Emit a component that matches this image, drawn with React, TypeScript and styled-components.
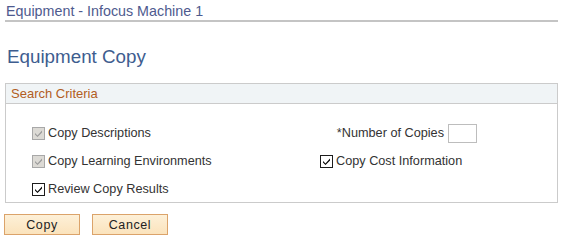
import React from "react";
import styled, { createGlobalStyle } from "styled-components";

const Global = createGlobalStyle`
  html, body { margin: 0; padding: 0; background: #fff; }
  body { font-family: Arial, "Liberation Sans", sans-serif; }
`;

const Page = styled.div`
  width: 563px;
  height: 240px;
  box-sizing: border-box;
  padding: 0 5px 0 5px;
  display: flex;
  flex-direction: column;
`;

const PageTitle = styled.div`
  font-size: 14.3px;
  color: #4e5a8e;
  padding: 3px 0 2px 1px;
  line-height: 16px;
  border-bottom: 2px solid #c4c4c4;
  height: 15px;
`;

const Heading = styled.h1`
  margin: 25px 0 0 2px;
  font-size: 18.8px;
  font-weight: normal;
  line-height: 20px;
  color: #3e5d8f;
`;

const Box = styled.section`
  margin-top: 16px;
  width: 553px;
  height: 120px;
  box-sizing: border-box;
  border: 1px solid #cbcbcb;
  display: flex;
  flex-direction: column;
`;

const BoxHeader = styled.div`
  height: 19px;
  background: #f0f4f6;
  border-bottom: 1px solid #cbcbcb;
  color: #b25d23;
  font-size: 13px;
  line-height: 19px;
  padding-left: 5px;
`;

const Grid = styled.div`
  display: grid;
  grid-template-columns: 288px 1fr;
  grid-auto-rows: 28px;
  padding: 19px 0 0 26px;
  font-size: 12.7px;
  color: #333;
`;

const CheckRow = styled.label`
  display: flex;
  align-items: center;
  gap: 3px;
  height: 20px;
`;

const Box13 = styled.span<{ $disabled?: boolean }>`
  width: 13px;
  height: 13px;
  box-sizing: border-box;
  border: 1px solid ${(p) => (p.$disabled ? "#a8a8a8" : "#1c1c1c")};
  background: ${(p) => (p.$disabled ? "#dcdad5" : "#fff")};
  display: inline-flex;
  align-items: center;
  justify-content: center;
  flex: none;
`;

const NumberField = styled.div`
  display: flex;
  align-items: center;
  justify-content: flex-end;
  gap: 4px;
  width: 157px;
  height: 20px;
`;

const Input = styled.span`
  width: 29px;
  height: 19px;
  box-sizing: border-box;
  border: 1px solid #bdbdbd;
  background: #fff;
`;

const Buttons = styled.div`
  display: flex;
  gap: 12px;
  margin-top: 11px;
  margin-left: -1px;
`;

const Button = styled.button`
  width: 76px;
  height: 21px;
  box-sizing: border-box;
  border: 1px solid #dba36a;
  background: linear-gradient(#fdf0d8, #fbe3bc);
  font-family: Arial, "Liberation Sans", sans-serif;
  font-size: 12.5px;
  color: #222;
  letter-spacing: 0.6px;
  padding: 0;
`;

function Check({ disabled }: { disabled?: boolean }) {
  const c = disabled ? "#9a9a9a" : "#000";
  return (
    <Box13 $disabled={disabled}>
      <svg width="9" height="9" viewBox="0 0 9 9">
        <path d="M1 4 L3.5 6.5 L8 1.5 L8 3.5 L3.5 8 L1 5.5 Z" fill={c} />
      </svg>
    </Box13>
  );
}

export default function App() {
  return (
    <>
      <Global />
      <Page>
        <PageTitle>Equipment - Infocus Machine 1</PageTitle>
        <Heading>Equipment Copy</Heading>
        <Box>
          <BoxHeader>Search Criteria</BoxHeader>
          <Grid>
            <CheckRow>
              <Check disabled />
              Copy Descriptions
            </CheckRow>
            <NumberField>
              *Number of Copies
              <Input />
            </NumberField>
            <CheckRow>
              <Check disabled />
              Copy Learning Environments
            </CheckRow>
            <CheckRow>
              <Check />
              Copy Cost Information
            </CheckRow>
            <CheckRow>
              <Check />
              Review Copy Results
            </CheckRow>
          </Grid>
        </Box>
        <Buttons>
          <Button>Copy</Button>
          <Button>Cancel</Button>
        </Buttons>
      </Page>
    </>
  );
}
